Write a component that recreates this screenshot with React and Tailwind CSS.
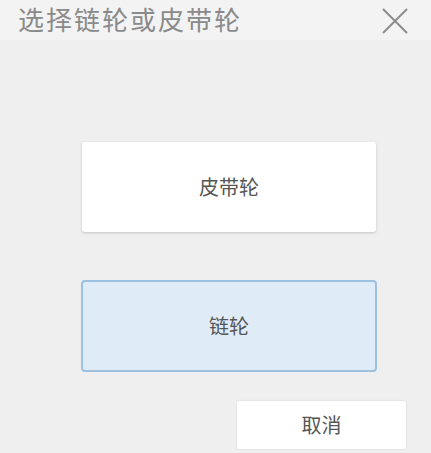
export default function App() {
  const cjk = { fontFamily: '"Noto Sans CJK SC", sans-serif' };

  return (
    <div className="w-[431px] h-[453px] bg-[#efefef] flex flex-col overflow-hidden" style={cjk}>
      <div className="h-[40px] bg-[#f3f3f3] flex items-start justify-between pl-[18px] pr-[22px] pt-[2px]">
        <span className="text-[26px] leading-[34px] text-[#8a8a8a] tracking-[2px]">选择链轮或皮带轮</span>
        <svg width="28" height="28" viewBox="0 0 28 28" className="mt-[5px]">
          <path d="M2 2L26 26M26 2L2 26" stroke="#8c8c8c" strokeWidth="2" fill="none" />
        </svg>
      </div>

      <div className="flex flex-col pl-[82px] pt-[102px]">
        <button className="w-[294px] h-[90px] bg-white rounded-[3px] shadow-[0_1px_3px_rgba(0,0,0,0.18)] text-[20px] text-[#555] flex items-center justify-center">
          皮带轮
        </button>
        <button className="mt-[48px] -ml-[1px] w-[296px] h-[92px] bg-[#dfecf8] border-2 border-[#9cc0e0] rounded-[4px] text-[20px] text-[#555] flex items-center justify-center">
          链轮
        </button>
      </div>

      <div className="flex justify-end pr-[25px] pt-[29px]">
        <button className="w-[169px] h-[48px] bg-white rounded-[2px] shadow-[0_0_2px_rgba(0,0,0,0.15)] text-[20px] text-[#555] flex items-center justify-center">
          取消
        </button>
      </div>
    </div>
  );
}
